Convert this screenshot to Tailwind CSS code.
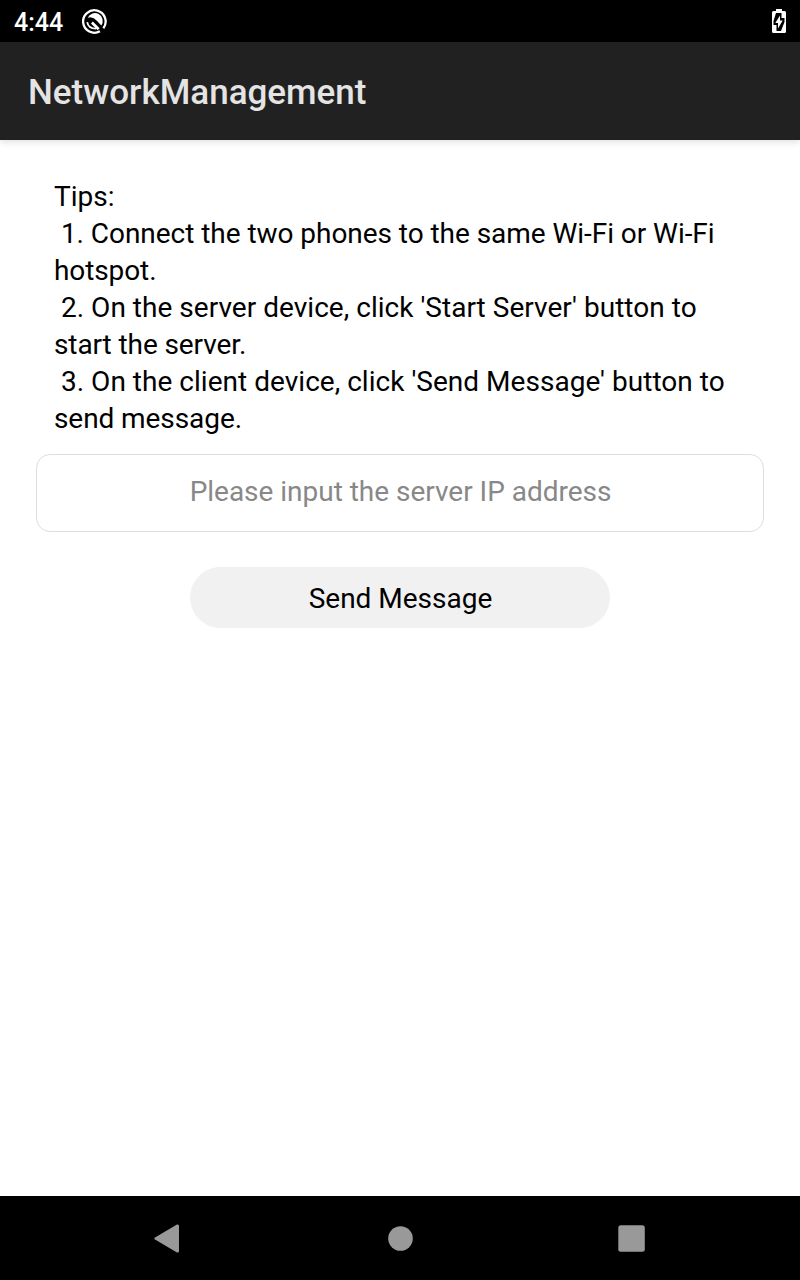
<!DOCTYPE html>
<html lang="en">
<head>
<meta charset="utf-8">
<title>NetworkManagement</title>
<script src="https://cdn.jsdelivr.net/npm/@tailwindcss/browser@4"></script>
</head>
<body class="flex h-[1280px] w-[800px] flex-col overflow-hidden bg-white font-[Roboto,sans-serif] text-black">
<div class="flex h-[42px] shrink-0 items-center bg-black px-[14px] text-white">
<span class="w-[68px] pt-[3px] text-[25px] leading-[42px] font-medium">4:44</span>
<svg class="mt-px size-[25px]" viewBox="0 0 24 24" fill="none"><path d="M17.200 21.400A10.800 10.800 0 1 1 20.500 18.500" stroke="#fff" stroke-width="2.200"/><path d="M5.500 8.500A7.500 7.500 0 1 1 18.500 15.800L14.500 11.500Q10 6.500 5.500 8.500z" fill="#fff"/><path d="M5 12.500Q6 18.800 13.500 18.800" stroke="#fff" stroke-width="1.700"/><path d="M9.500 13 16 19.500" stroke="#fff" stroke-width="2.600"/></svg>
<svg class="ml-auto h-6 w-[14px]" viewBox="0 0 14 24"><path fill="#fff" d="M4 0h6v2h2.500q1.500 0 1.500 1.500v19q0 1.500-1.500 1.500h-11Q0 24 0 22.500v-19Q0 2 1.500 2H4z"/><path fill="#000" d="M4 4H9.500v5h3v4L9 22H4.500v-6h-3v-4z"/><path fill="#fff" d="M8 6.500v5h2.700L6 19.500V14H3.300z"/></svg>
</div>
<header class="z-10 flex h-[98px] shrink-0 items-center bg-[#212121] px-7 pt-[5px] shadow-[0_2px_7px_rgba(0,0,0,.13)]">
<h1 class="text-[35px] font-medium whitespace-nowrap text-[#e4e4e4]">NetworkManagement</h1>
</header>
<main class="flex flex-1 flex-col items-center px-9 pt-[38px]">
<div class="h-[276px] w-full pl-[18px] text-[28px] leading-[37px]">
<p>Tips:</p>
<p class="whitespace-pre tracking-[-0.045px]"> 1. Connect the two phones to the same Wi-Fi or Wi-Fi</p>
<p class="tracking-[-0.1px]">hotspot.</p>
<p class="whitespace-pre tracking-[0.025px]"> 2. On the server device, click 'Start Server' button to</p>
<p class="tracking-[-0.1px]">start the server.</p>
<p class="whitespace-pre tracking-[0.025px]"> 3. On the client device, click 'Send Message' button to</p>
<p class="tracking-[-0.08px]">send message.</p>
</div>
<div class="flex h-[78px] w-full items-center justify-center rounded-[14px] border border-[#ddd] pb-[2px] pl-px text-[28px] tracking-[-0.02px] text-[#888]">Please input the server IP address</div>
<button class="mt-[35px] h-[61px] w-[420px] rounded-full bg-[#f1f1f1] pt-[2px] pl-px text-[28px]">Send Message</button>
</main>
<nav class="flex h-[84px] shrink-0 bg-black">
<svg class="h-[84px] w-[800px]" viewBox="0 0 800 84" fill="#999"><path d="M155 41.500Q153.500 42.500 155 43.500L177 56.500Q179 57 179 55V30Q179 28 177 28.500z"/><circle cx="400.500" cy="42.500" r="12.300"/><rect x="618.300" y="29.300" width="26.500" height="26.500" rx="2.500"/></svg>
</nav>
</body>
</html>
